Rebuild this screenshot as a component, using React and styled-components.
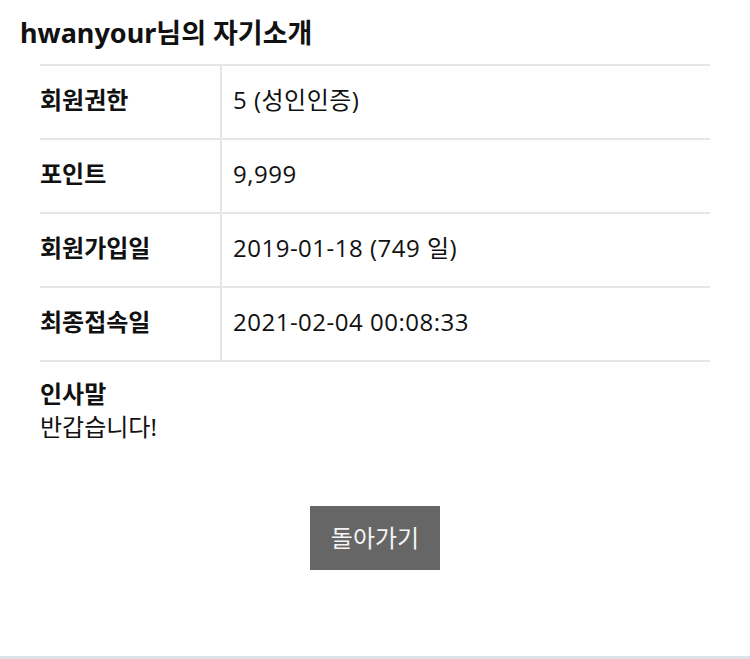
import React from 'react';
import styled, { createGlobalStyle } from 'styled-components';

const GlobalStyle = createGlobalStyle`
  html, body {
    margin: 0;
    padding: 0;
    background: #fff;
  }
  body {
    font-family: "Noto Sans", "Noto Sans CJK KR", sans-serif;
    color: #111;
  }
`;

const Page = styled.div`
  width: 750px;
`;

const Title = styled.h1`
  margin: 0;
  padding: 13px 20px 0;
  height: 51px;
  font-size: 27px;
  font-weight: 700;
  line-height: 40px;
  color: #111;
`;

const Section = styled.section`
  padding: 0 40px;
`;

const Table = styled.table`
  width: 100%;
  border-collapse: collapse;
  border-top: 2px solid #e6e6e6;
`;

const Row = styled.tr`
  height: 74px;
  border-bottom: 2px solid #e6e6e6;
`;

const Head = styled.th`
  width: 180px;
  padding: 0 0 4px;
  text-align: left;
  font-size: 24px;
  font-weight: 700;
  line-height: 30px;
  border-right: 2px solid #e6e6e6;
`;

const Cell = styled.td`
  padding: 0 0 4px 11px;
  font-family: "Open Sans", "Noto Sans CJK KR", sans-serif;
  font-size: 24px;
  font-weight: 400;
  line-height: 30px;
  letter-spacing: 0.5px;
`;

const Greeting = styled.div`
  padding-top: 15px;
  line-height: 33px;
`;

const GreetingTitle = styled.strong`
  display: block;
  font-size: 24px;
  font-weight: 700;
`;

const GreetingText = styled.p`
  margin: 0;
  font-size: 24px;
`;

const Actions = styled.div`
  display: flex;
  justify-content: center;
  padding-top: 63px;
`;

const BackButton = styled.a`
  display: flex;
  align-items: center;
  justify-content: center;
  width: 130px;
  height: 64px;
  padding-bottom: 3px;
  box-sizing: border-box;
  background: #666;
  color: #f4f4f4;
  font-size: 24px;
  text-decoration: none;
`;

const Footer = styled.div`
  margin-top: 86px;
  border-top: 3px solid #dce2e7;
`;

const rows = [
  ['회원권한', '5 (성인인증)'],
  ['포인트', '9,999'],
  ['회원가입일', '2019-01-18 (749 일)'],
  ['최종접속일', '2021-02-04 00:08:33'],
];

export default function App() {
  return (
    <Page>
      <GlobalStyle />
      <Title>hwanyour님의 자기소개</Title>
      <Section>
        <Table>
          <tbody>
            {rows.map(([label, value]) => (
              <Row key={label}>
                <Head>{label}</Head>
                <Cell>{value}</Cell>
              </Row>
            ))}
          </tbody>
        </Table>
        <Greeting>
          <GreetingTitle>인사말</GreetingTitle>
          <GreetingText>반갑습니다!</GreetingText>
        </Greeting>
      </Section>
      <Actions>
        <BackButton href="#">돌아가기</BackButton>
      </Actions>
      <Footer />
    </Page>
  );
}
